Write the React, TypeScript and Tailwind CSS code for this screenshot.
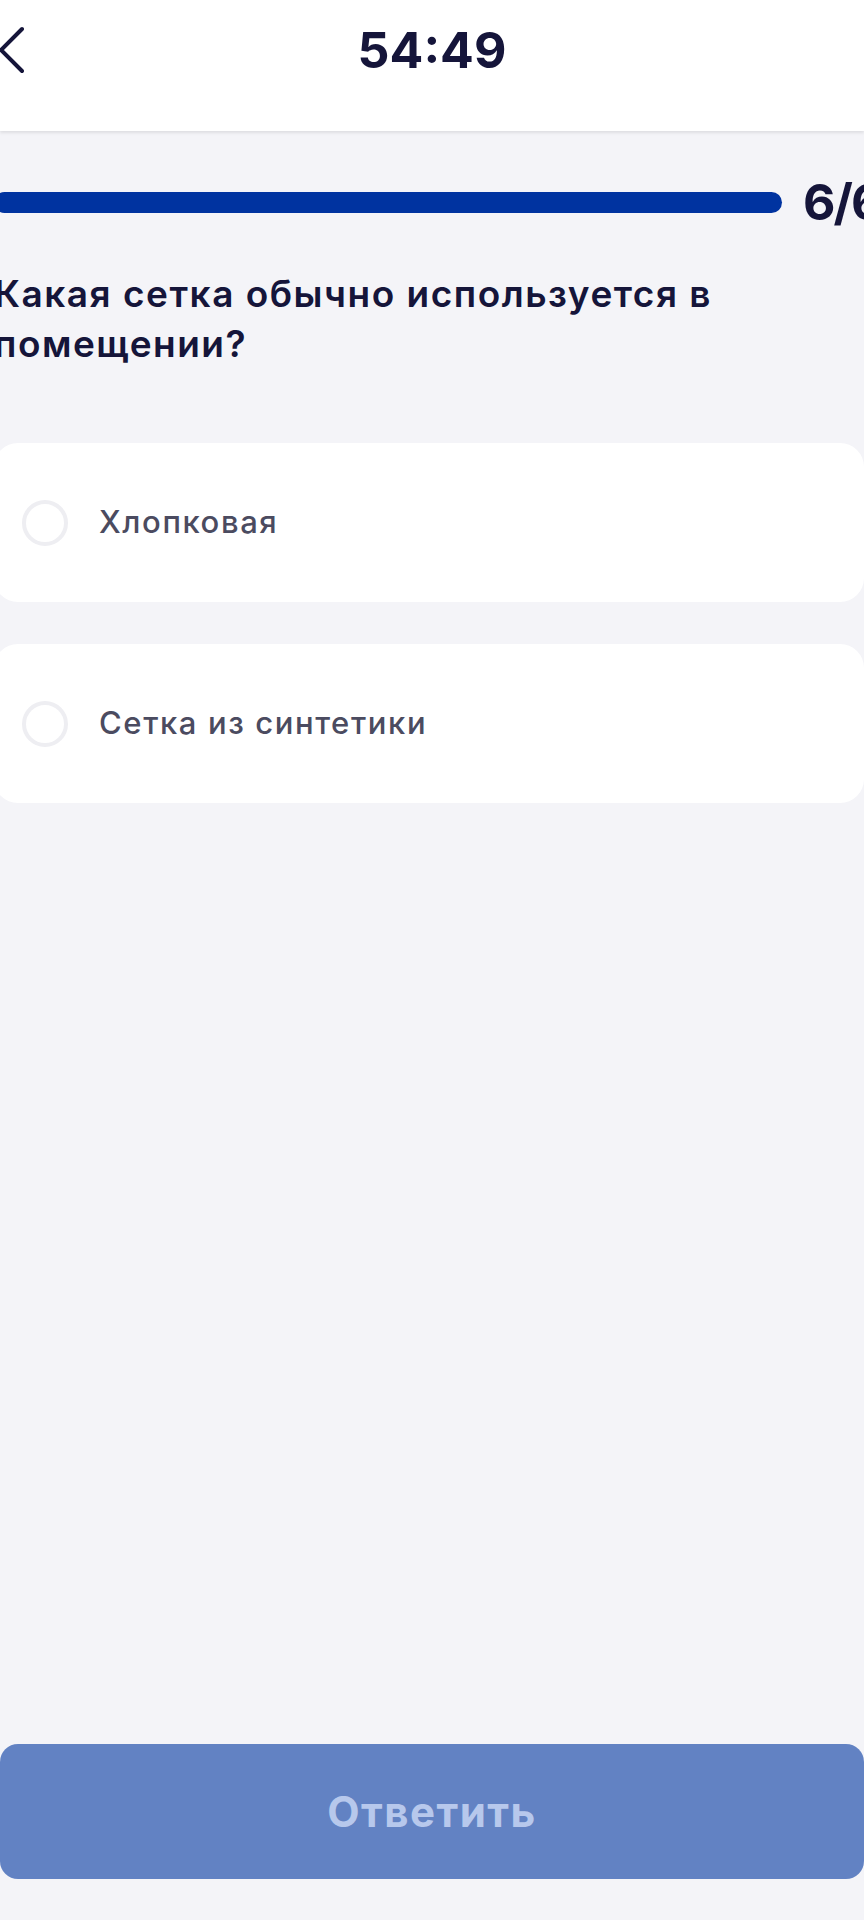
import React from 'react';

type OptionProps = {
  label: string;
};

const Option: React.FC<OptionProps> = ({ label }) => {
  return (
    <div className="h-[159px] w-[870px] bg-white rounded-[24px] flex items-center pl-[28px] gap-[31px]">
      <span className="w-[46px] h-[46px] rounded-full border-[4px] border-[#eeeef2] bg-white shrink-0" />
      <span className="text-[31px] font-medium text-[#4b4b60] tracking-[1.6px]">{label}</span>
    </div>
  );
};

export default function App() {
  return (
    <div className="w-[864px] h-[1920px] bg-[#f4f4f8] flex flex-col overflow-hidden font-['Inter','Noto_Sans',sans-serif]">
      {/* top bar */}
      <header className="relative h-[131px] bg-white shrink-0 flex justify-center shadow-[0_2px_3px_rgba(0,0,0,0.09)] z-10">
        <button className="absolute left-[-2px] top-[26px] w-[28px] h-[48px]">
          <svg viewBox="0 0 28 48" className="w-[28px] h-[48px]" fill="none" stroke="#15153a" strokeWidth="4" strokeLinecap="round" strokeLinejoin="round">
            <path d="M24 3 L3 24 L24 45" />
          </svg>
        </button>
        <div className="h-[100px] flex items-center">
          <span className="text-[50px] leading-none font-bold text-[#15153a]">54:49</span>
        </div>
      </header>

      <main className="flex flex-col flex-1 ml-[-6px] w-[870px]">
        {/* progress */}
        <div className="mt-[46px] flex items-center gap-[21px]">
          <div className="w-[788px] h-[21px] rounded-full bg-[#0033a0] shrink-0" />
          <span className="text-[50px] leading-none font-bold text-[#15153a] whitespace-nowrap tracking-[-2px]">6/6</span>
        </div>

        <h1 className="mt-[42px] text-[37px] leading-[50px] font-semibold text-[#15153a] tracking-[1.5px] pr-[100px]">
          Какая сетка обычно используется в помещении?
        </h1>

        <div className="mt-[74px] flex flex-col gap-[42px]">
          <Option label="Хлопковая" />
          <Option label="Сетка из синтетики" />
        </div>

        <button className="mt-auto mb-[41px] ml-[6px] w-[864px] h-[135px] rounded-[18px] bg-[#6282c3] flex items-center justify-center">
          <span className="text-[42px] font-bold text-[#b7c8ec] tracking-[1.5px]">Ответить</span>
        </button>
      </main>
    </div>
  );
}
